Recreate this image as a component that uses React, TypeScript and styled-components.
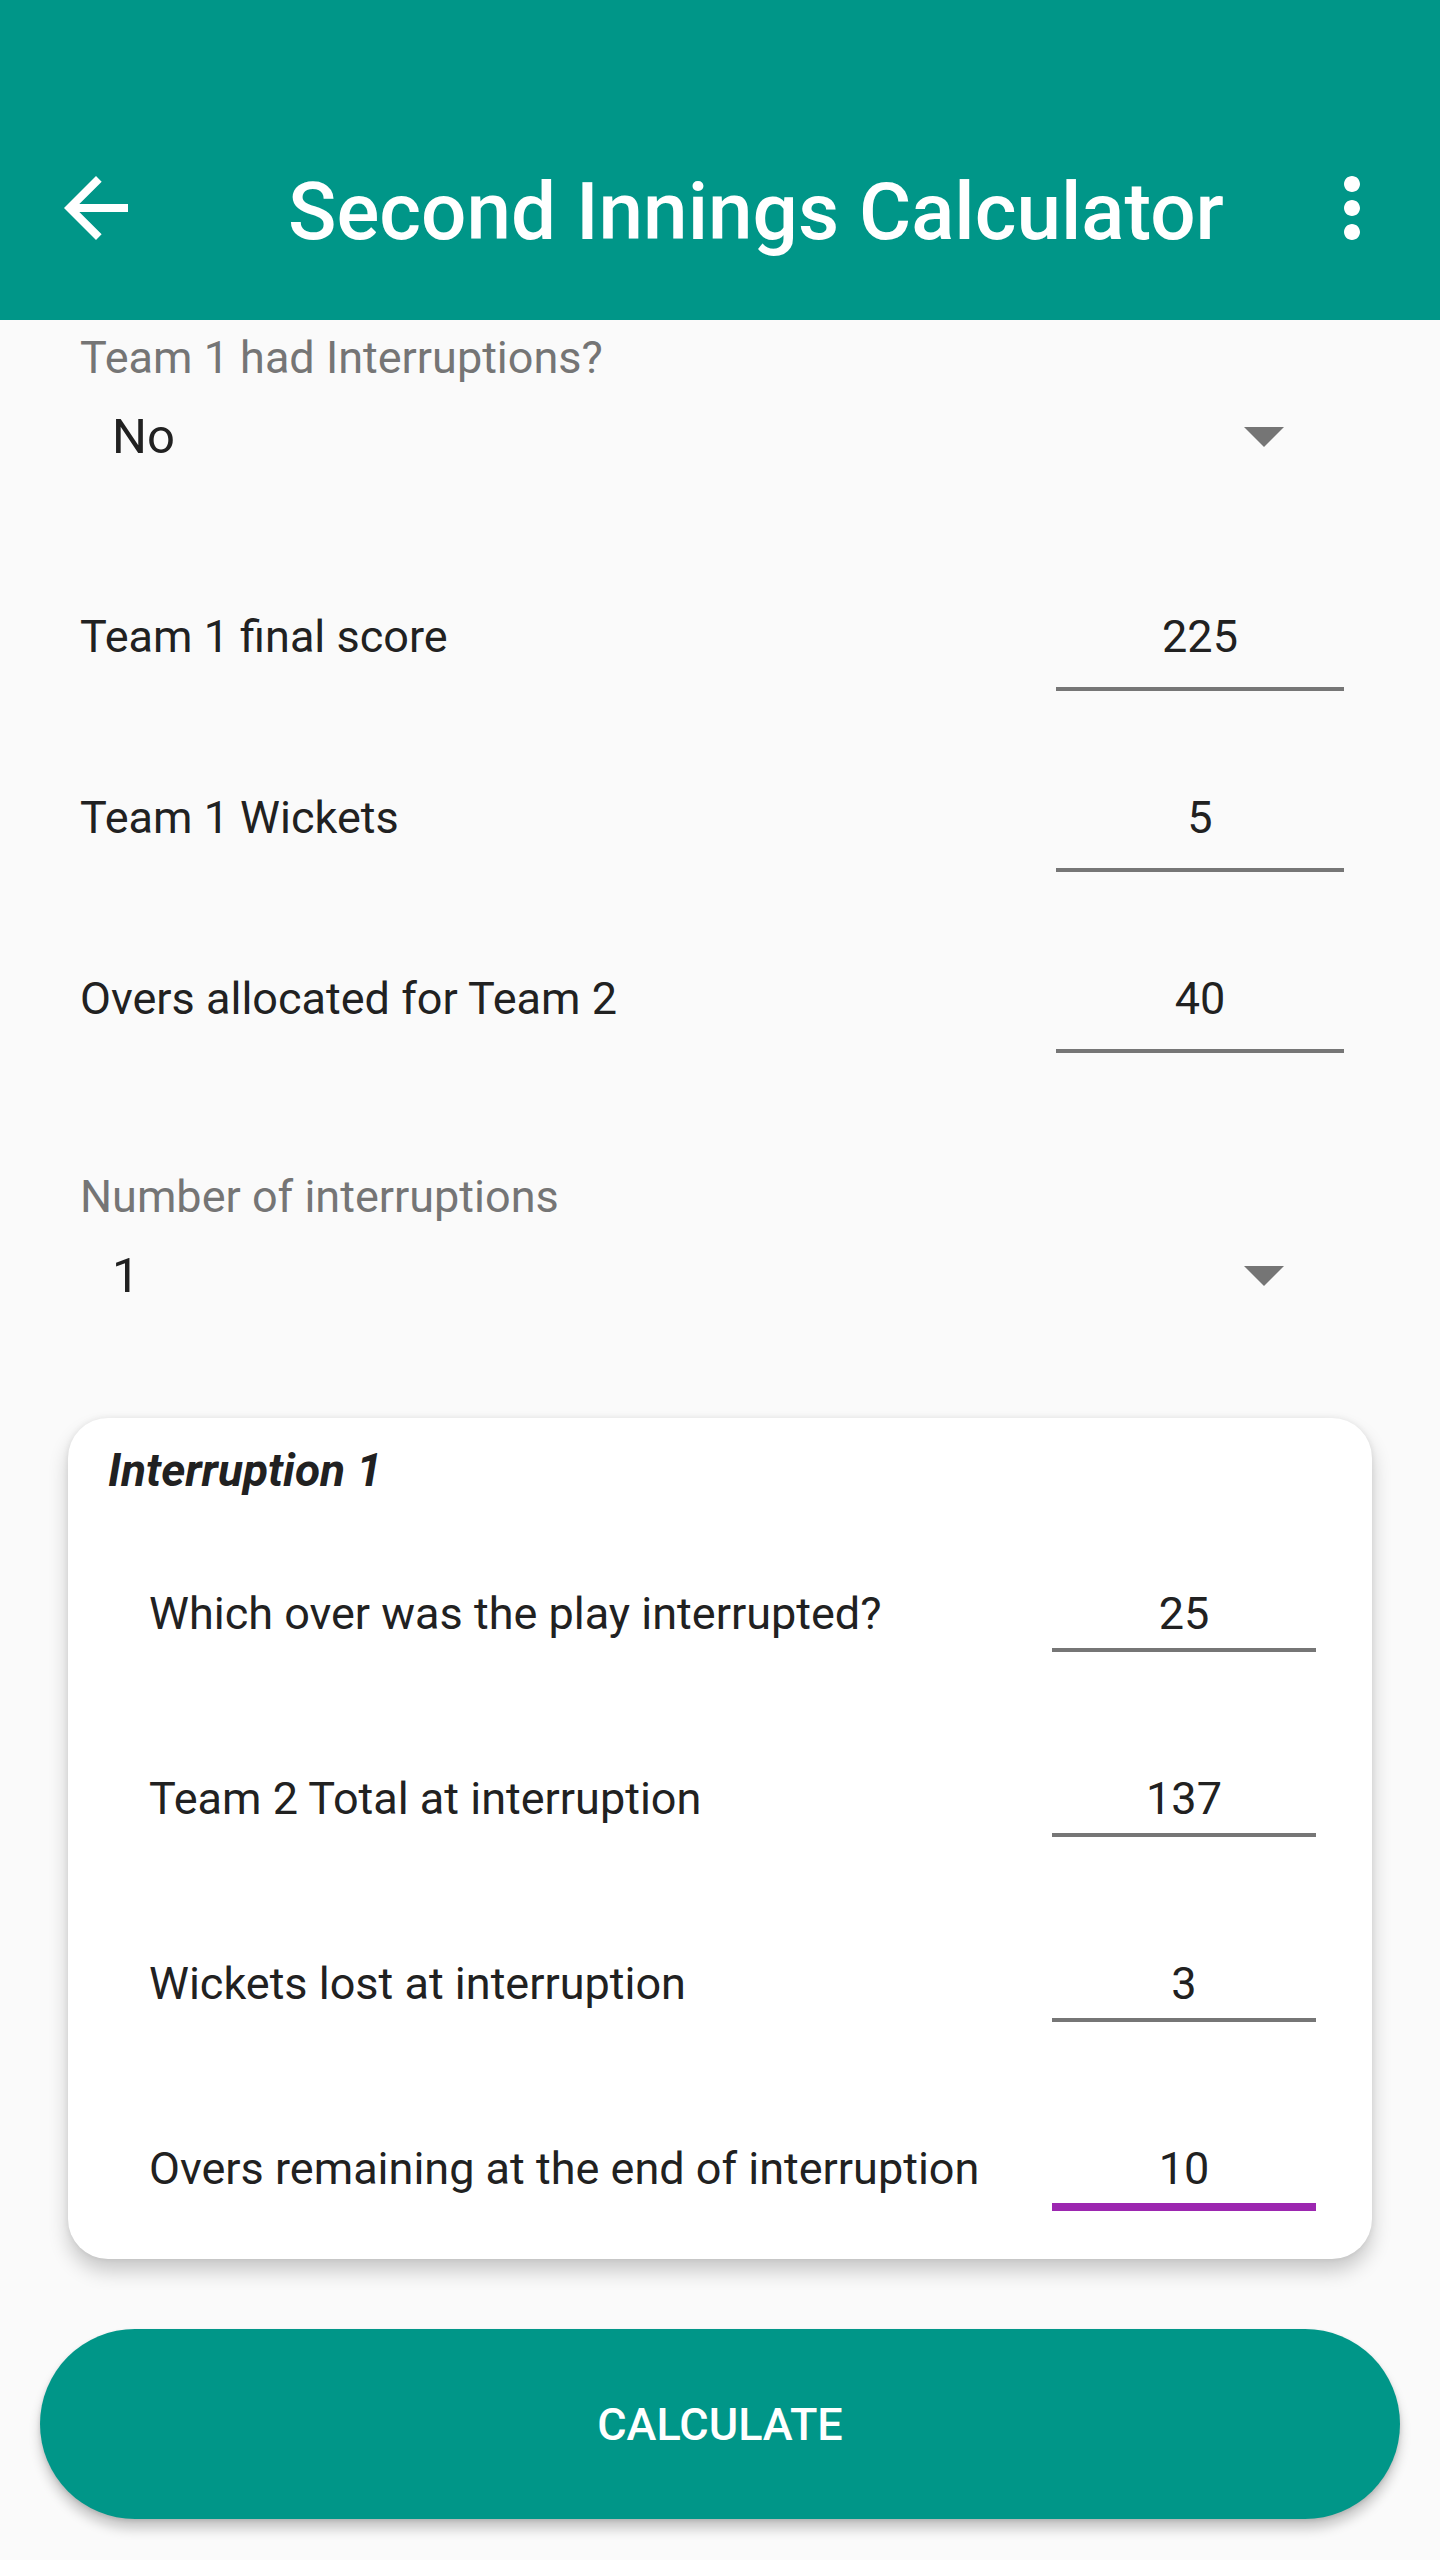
import React from "react";
import styled, { createGlobalStyle } from "styled-components";

const GlobalStyle = createGlobalStyle`
  html, body {
    margin: 0;
    padding: 0;
    background: #fafafa;
  }
  * { box-sizing: border-box; }
`;

const Page = styled.div`
  width: 1440px;
  min-height: 2560px;
  background: #fafafa;
  font-family: Roboto, "Noto Sans", "Liberation Sans", sans-serif;
  color: #212121;
`;

const AppBar = styled.header`
  height: 320px;
  padding-top: 96px;
  background: #009688;
`;

const Toolbar = styled.div`
  height: 224px;
  display: flex;
  align-items: center;
  padding: 0 40px 0 48px;
`;

const IconButton = styled.div`
  width: 96px;
  height: 96px;
  display: flex;
  align-items: center;
  justify-content: center;
  flex-shrink: 0;
`;

const Title = styled.h1`
  flex: 1;
  margin: 8px 0 0 144px;
  font-size: 80px;
  font-weight: 500;
  line-height: 80px;
  color: #ffffff;
  white-space: nowrap;
`;

const Section = styled.section<{ $top: number }>`
  margin-top: ${(p) => p.$top}px;
  padding: 0 96px 0 80px;
`;

const SpinnerLabel = styled.div`
  font-size: 45px;
  line-height: 45px;
  color: #757575;
`;

const SpinnerRow = styled.div`
  margin-top: 32px;
  height: 49px;
  display: flex;
  align-items: center;
  justify-content: space-between;
  padding: 0 60px 0 32px;
`;

const SpinnerValue = styled.div`
  font-size: 49px;
  line-height: 49px;
  color: #212121;
`;

const Caret = styled.div`
  width: 0;
  height: 0;
  border-left: 20px solid transparent;
  border-right: 20px solid transparent;
  border-top: 20px solid #757575;
`;

const FieldList = styled.div<{ $gap: number }>`
  display: flex;
  flex-direction: column;
  gap: ${(p) => p.$gap}px;
`;

const FieldRow = styled.div`
  display: flex;
  align-items: flex-start;
  justify-content: space-between;
`;

const FieldLabel = styled.div`
  font-size: 45px;
  line-height: 45px;
  color: #212121;
  white-space: nowrap;
`;

const FieldInput = styled.div<{ $width: number; $pad: number; $focused?: boolean }>`
  width: ${(p) => p.$width}px;
  font-size: 45px;
  line-height: 45px;
  text-align: center;
  color: #212121;
  padding-bottom: ${(p) => p.$pad}px;
  border-bottom: ${(p) => (p.$focused ? "8px solid #9c27b0" : "4px solid #767676")};
`;

const Card = styled.div`
  margin: 118px 68px 0 68px;
  background: #ffffff;
  border-radius: 40px;
  padding: 30px 56px 48px 40px;
  box-shadow: 0 12px 20px rgba(0, 0, 0, 0.2), 0 0 6px rgba(0, 0, 0, 0.08);
`;

const CardTitle = styled.div`
  font-size: 46px;
  line-height: 45px;
  font-weight: 700;
  font-style: italic;
  color: #212121;
`;

const CardFields = styled(FieldList)`
  margin-top: 98px;
  padding-left: 41px;
`;

const CalculateButton = styled.button`
  display: flex;
  align-items: center;
  justify-content: center;
  width: calc(100% - 80px);
  height: 190px;
  margin: 70px 40px 0 40px;
  border: none;
  border-radius: 95px;
  background: #009688;
  color: #ffffff;
  font-family: Roboto, "Noto Sans", "Liberation Sans", sans-serif;
  font-size: 45px;
  font-weight: 500;
  letter-spacing: 0;
  box-shadow: 0 10px 12px rgba(0, 0, 0, 0.2), 0 2px 4px rgba(0, 0, 0, 0.12);
`;

const BackIcon = () => (
  <svg width="96" height="96" viewBox="0 0 24 24" fill="#ffffff">
    <path d="M20 11H7.83l5.59-5.59L12 4l-8 8 8 8 1.41-1.41L7.83 13H20v-2z" />
  </svg>
);

const MoreIcon = () => (
  <svg width="96" height="96" viewBox="0 0 24 24" fill="#ffffff">
    <path d="M12 8c1.1 0 2-.9 2-2s-.9-2-2-2-2 .9-2 2 .9 2 2 2zm0 2c-1.1 0-2 .9-2 2s.9 2 2 2 2-.9 2-2-.9-2-2-2zm0 6c-1.1 0-2 .9-2 2s.9 2 2 2 2-.9 2-2-.9-2-2-2z" />
  </svg>
);

const Spinner = ({ label, value, top }: { label: string; value: string; top: number }) => (
  <Section $top={top}>
    <SpinnerLabel>{label}</SpinnerLabel>
    <SpinnerRow>
      <SpinnerValue>{value}</SpinnerValue>
      <Caret />
    </SpinnerRow>
  </Section>
);

const mainFields = [
  { label: "Team 1 final score", value: "225" },
  { label: "Team 1 Wickets", value: "5" },
  { label: "Overs allocated for Team 2", value: "40" },
];

const interruptionFields = [
  { label: "Which over was the play interrupted?", value: "25" },
  { label: "Team 2 Total at interruption", value: "137" },
  { label: "Wickets lost at interruption", value: "3" },
  { label: "Overs remaining at the end of interruption", value: "10", focused: true },
];

export default function App() {
  return (
    <Page>
      <GlobalStyle />
      <AppBar>
        <Toolbar>
          <IconButton>
            <BackIcon />
          </IconButton>
          <Title>Second Innings Calculator</Title>
          <IconButton>
            <MoreIcon />
          </IconButton>
        </Toolbar>
      </AppBar>

      <Spinner label="Team 1 had Interruptions?" value="No" top={15} />

      <Section $top={153}>
        <FieldList $gap={104}>
          {mainFields.map((f) => (
            <FieldRow key={f.label}>
              <FieldLabel>{f.label}</FieldLabel>
              <FieldInput $width={288} $pad={28}>
                {f.value}
              </FieldInput>
            </FieldRow>
          ))}
        </FieldList>
      </Section>

      <Spinner label="Number of interruptions" value="1" top={121} />

      <Card>
        <CardTitle>Interruption 1</CardTitle>
        <CardFields $gap={124}>
          {interruptionFields.map((f) => (
            <FieldRow key={f.label}>
              <FieldLabel>{f.label}</FieldLabel>
              <FieldInput $width={264} $pad={12} $focused={f.focused}>
                {f.value}
              </FieldInput>
            </FieldRow>
          ))}
        </CardFields>
      </Card>

      <CalculateButton>CALCULATE</CalculateButton>
    </Page>
  );
}
